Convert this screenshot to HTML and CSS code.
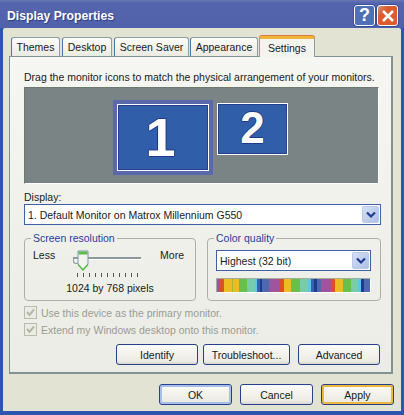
FILE: index.html
```html
<!DOCTYPE html>
<html lang="en">
<head>
    <meta charset="UTF-8">
    <meta name="viewport" content="width=device-width, initial-scale=1.0">
    <title>Display Properties</title>
    <link rel="stylesheet" href="styles.css">
</head>
<body>

    <div class="window">
        <div class="titlebar">
            <span class="title">Display Properties</span>
            <div class="caption-buttons">
                <div class="cap help">?</div>
                <div class="cap close">
                    <svg width="16" height="16" viewBox="0 0 16 16"><path d="M3 3 L13 13 M13 3 L3 13" stroke="#fff" stroke-width="2.6"/></svg>
                </div>
            </div>
        </div>

        <div class="client">
            <div class="tabs">
                <div class="tab tab-themes">Themes</div>
                <div class="tab tab-desktop">Desktop</div>
                <div class="tab tab-saver">Screen Saver</div>
                <div class="tab tab-appearance">Appearance</div>
                <div class="tab active">Settings</div>
            </div>

            <div class="panel">
                <p class="intro">Drag the monitor icons to match the physical arrangement of your monitors.</p>

                <div class="desk">
                    <div class="monitor-select">
                        <div class="monitor primary">1</div>
                    </div>
                    <div class="monitor second">2</div>
                </div>

                <label class="field-label">Display:</label>
                <div class="combo combo-display">
                    <span>1. Default Monitor on Matrox Millennium G550</span>
                    <div class="combo-btn">
                        <svg width="10" height="8" viewBox="0 0 10 8"><path d="M1 1.5 L5 5.5 L9 1.5" fill="none" stroke="#1e3a8c" stroke-width="2.2"/></svg>
                    </div>
                </div>

                <div class="groups">
                    <fieldset class="group group-res">
                        <legend>Screen resolution</legend>
                        <div class="slider-row">
                            <span>Less</span>
                            <div class="slider">
                                <div class="track"></div>
                                <svg class="thumb" width="12" height="21" viewBox="0 0 12 21">
                                    <path d="M1 1 H11 V14 L6 20 L1 14 Z" fill="#f4f4ee" stroke="#7f96ac"/>
                                    <path d="M1.5 3 H10.5" stroke="#5dbb4a" stroke-width="3"/>
                                    <path d="M1 14.5 L6 20 L11 14.5" fill="none" stroke="#5dbb4a" stroke-width="1.5"/>
                                </svg>
                                <div class="ticks">
                                    <i></i><i></i><i></i><i></i><i></i><i></i><i></i><i></i><i></i><i></i><i></i>
                                </div>
                            </div>
                            <span>More</span>
                        </div>
                        <div class="res-text">1024 by 768 pixels</div>
                    </fieldset>

                    <fieldset class="group group-color">
                        <legend>Color quality</legend>
                        <div class="combo combo-color">
                            <span>Highest (32 bit)</span>
                            <div class="combo-btn">
                                <svg width="10" height="8" viewBox="0 0 10 8"><path d="M1 1.5 L5 5.5 L9 1.5" fill="none" stroke="#1e3a8c" stroke-width="2.2"/></svg>
                            </div>
                        </div>
                        <div class="spectrum"></div>
                    </fieldset>
                </div>

                <div class="check-row">
                    <div class="check">
                        <svg width="11" height="11" viewBox="0 0 11 11"><path d="M2 5 L4.5 8 L9 2.5" fill="none" stroke="#b3b8a8" stroke-width="2"/></svg>
                    </div>
                    <span>Use this device as the primary monitor.</span>
                </div>
                <div class="check-row">
                    <div class="check">
                        <svg width="11" height="11" viewBox="0 0 11 11"><path d="M2 5 L4.5 8 L9 2.5" fill="none" stroke="#b3b8a8" stroke-width="2"/></svg>
                    </div>
                    <span>Extend my Windows desktop onto this monitor.</span>
                </div>

                <div class="panel-buttons">
                    <button class="btn btn-identify">Identify</button>
                    <button class="btn btn-trouble">Troubleshoot...</button>
                    <button class="btn btn-advanced">Advanced</button>
                </div>
            </div>

            <div class="dialog-buttons">
                <button class="btn btn-dialog btn-ok">OK</button>
                <button class="btn btn-dialog">Cancel</button>
                <button class="btn btn-dialog btn-apply">Apply</button>
            </div>
        </div>
    </div>

</body>
</html>
```

FILE: styles.css
```css
* {
    box-sizing: border-box;
}
html, body {
    margin: 0;
    padding: 0;
}
body {
    width: 404px;
    height: 415px;
    overflow: hidden;
    background: #c9ccd6;
    font-family: "Liberation Sans", Arial, sans-serif;
    font-size: 10.5px;
    color: #1a1a1a;
}
.window {
    width: 404px;
    height: 415px;
    display: flex;
    flex-direction: column;
    background: #2b55ae;
    padding: 0 1px 4px 1px;
}
.titlebar {
    height: 28px;
    flex-shrink: 0;
    margin: 0 -1px;
    padding: 4px 6px 0 7px;
    display: flex;
    align-items: center;
    justify-content: space-between;
    background: linear-gradient(to bottom, #6a78b4 0, #5465ad 3px, #5162ac 100%);
}
.title {
    color: #fff;
    font-size: 12.2px;
    font-weight: bold;
    text-shadow: 1px 1px 1px #2a3c80;
}
.caption-buttons {
    display: flex;
    gap: 2px;
    margin-top: -1px;
}
.cap {
    width: 21px;
    height: 21px;
    border: 1px solid #fff;
    border-radius: 3px;
    display: flex;
    align-items: center;
    justify-content: center;
    box-shadow: 0 0 0 0.5px #1e3a8c;
}
.help {
    background: #4f70b8;
    color: #fff;
    font-size: 18px;
    font-weight: bold;
}
.close {
    background: linear-gradient(135deg, #c4a088 0, #dc5a2c 30%);
}
.client {
    flex: 1;
    margin-left: 2px;
    margin-right: 2px;
    background: #e3e3d4;
    padding: 8px 0 0 6px;
    display: flex;
    flex-direction: column;
    border-radius: 2px 2px 0 0;
}

/* tabs */
.tabs {
    display: flex;
    align-items: flex-end;
    height: 20px;
    padding-left: 2px;
    gap: 1px;
    position: relative;
    z-index: 1;
}
.tab {
    height: 19px;
    padding-top: 3px;
    text-align: center;
    background: linear-gradient(to bottom, #fcfcf9, #ecebe2);
    border: 1px solid #8b9fa0;
    border-bottom: none;
    border-left-color: #4d74b8;
    border-radius: 3px 3px 0 0;
}
.tab-themes { width: 49px; }
.tab-desktop { width: 50px; margin-left: 1px; }
.tab-saver { width: 75px; margin-left: 1px; }
.tab-appearance { width: 68px; }
.tab.active {
    width: 56px;
    height: 21px;
    margin-left: 0;
    padding-top: 3px;
    margin-bottom: -1px;
    background: #f4f4ef;
    border: 1px solid #8b9fa0;
    border-bottom: none;
    border-top: 3px solid #f0b43a;
    box-shadow: 0 -1px 0 #dd7a3a;
}
.panel {
    width: 384px;
    height: 318px;
    flex-shrink: 0;
    padding: 0 0 0 14px;
    border: 1px solid #7f9294;
    border-bottom-width: 2px;
    border-right-width: 2px;
    background: linear-gradient(to bottom, #f6f6f2, #ecece6);
}
.intro {
    margin: 13px 0 0 0;
    height: 17px;
    line-height: 14px;
    white-space: nowrap;
}

/* monitor area */
.desk {
    position: relative;
    width: 355px;
    height: 97px;
    background: #7b8485;
    border: 1px solid #6d7a70;
    border-right-color: #fff;
    border-bottom-color: #fff;
}
.monitor-select {
    position: absolute;
    left: 88px;
    top: 12px;
    width: 100px;
    height: 75px;
    padding: 4px;
    background: #5a69ac;
}
.monitor {
    display: flex;
    justify-content: center;
    font-weight: bold;
    color: #fff;
    background: #305ea8;
    border: 1px solid #fff;
    box-shadow: inset 0 0 0 1px #24408f;
    text-shadow: 1px 0 0 #1e3a8c, -1px 0 0 #1e3a8c, 0 1px 0 #1e3a8c, 0 -1px 0 #1e3a8c;
}
.primary {
    width: 92px;
    height: 67px;
    padding-right: 5px;
    font-size: 54px;
    line-height: 65px;
}
.second {
    position: absolute;
    left: 192px;
    top: 15px;
    width: 71px;
    height: 52px;
    font-size: 44px;
    line-height: 48px;
}
.field-label {
    display: block;
    height: 20px;
    padding-top: 6px;
    line-height: 14px;
}

/* combos */
.combo {
    display: flex;
    align-items: center;
    justify-content: space-between;
    background: #fff;
    border: 1px solid #3f5fa8;
    padding: 0 1px 0 3px;
}
.combo-display {
    width: 357px;
    height: 21px;
}
.combo-btn {
    width: 17px;
    height: 17px;
    display: flex;
    align-items: center;
    justify-content: center;
    border: 1px solid #b8c8e8;
    border-radius: 2px;
    background: linear-gradient(135deg, #d4e0f6, #aebfe6);
}

/* groups */
.groups {
    display: flex;
    gap: 11px;
    width: 357px;
    height: 69px;
    margin-top: 7px;
}
.group {
    margin: 0;
    height: 69px;
    border: 1px solid #a9b2a4;
    border-radius: 4px;
}
.group legend {
    color: #24409c;
    padding: 0 2px;
    margin-left: -2px;
    line-height: 13px;
}
.group-res {
    width: 172px;
    padding: 0 8px;
}
.group-color {
    width: 174px;
    padding: 0 8px;
}
.slider-row {
    display: flex;
    justify-content: space-between;
    margin: 3px 3px 0 0;
    line-height: 14px;
}
.slider {
    position: relative;
    width: 70px;
    height: 30px;
    margin-left: 1px;
}
.track {
    position: absolute;
    left: 0;
    right: 2px;
    top: 9px;
    height: 2px;
    background: #8c9a9c;
    box-shadow: 0 1px 0 #fff;
}
.track::before {
    content: "";
    position: absolute;
    left: 0;
    top: 0;
    width: 4px;
    height: 5px;
    border: 1px solid #8c9a9c;
    border-right: none;
    border-radius: 3px 0 0 3px;
}
.thumb {
    position: absolute;
    left: 4px;
    top: 2px;
}
.ticks {
    position: absolute;
    left: 4px;
    right: 5px;
    top: 25px;
    display: flex;
    justify-content: space-between;
}
.ticks i {
    width: 1px;
    height: 4px;
    background: #555;
}
.res-text {
    text-align: center;
    line-height: 14px;
    margin-top: 3px;
}
.combo-color {
    width: 155px;
    height: 21px;
    margin-top: 5px;
}
.spectrum {
    width: 155px;
    height: 15px;
    margin-top: 7px;
    border: 1px solid #a4aca0;
    border-right-color: #fff;
    border-bottom-color: #fff;
    background: linear-gradient(to right,
        #a0549e 0 3px, #e04e28 3px 7px, #eebc22 7px 15px, #a8b828 15px 16px,
        #eebc22 16px 22px, #68c048 22px 30px, #78ccac 30px 38px, #5cc8e8 38px 40px,
        #3a60b0 40px 43px, #1e3a8c 43px 45px, #5068b0 45px 52px, #a0549e 52px 63px,
        #e04e28 63px 67px, #eebc22 67px 74px, #68c048 74px 83px, #78ccac 83px 91px,
        #5cc8e8 91px 94px, #3a60b0 94px 97px, #1e3a8c 97px 100px, #5068b0 100px 104px,
        #a0549e 104px 114px, #e04e28 114px 118px, #eebc22 118px 126px, #68c048 126px 134px,
        #78ccac 134px 141px, #5cc8e8 141px 144px, #1e3a8c 144px 147px, #5068b0 147px 153px, #a0549e 153px 155px);
}

/* checkboxes */
.check-row {
    display: flex;
    align-items: center;
    gap: 4px;
    height: 17px;
    color: #9a9c92;
}
.groups + .check-row {
    margin-top: 3px;
}
.check {
    width: 13px;
    height: 13px;
    border: 1px solid #b8bcb0;
    background: #ecece4;
    display: flex;
    align-items: center;
    justify-content: center;
}

/* buttons */
.btn {
    height: 21px;
    padding: 0;
    font: inherit;
    color: #1a1a1a;
    border: 1px solid #24408f;
    border-radius: 3px;
    background: linear-gradient(to bottom, #fbfbf8, #ecebe3 85%, #d8d6c8);
}
.panel-buttons {
    display: flex;
    margin-top: 6px;
    margin-left: 92px;
}
.btn-identify { width: 82px; }
.btn-trouble { width: 87px; margin-left: 5px; }
.btn-advanced { width: 82px; margin-left: 8px; }
.dialog-buttons {
    display: flex;
    gap: 8px;
    margin-top: 10px;
    padding-left: 150px;
}
.btn-dialog {
    width: 73px;
}
.btn-ok {
    box-shadow: inset 0 0 0 2px #a8c0e8;
}
.btn-apply {
    box-shadow: inset 0 0 0 2px #eeb93a;
}
```
